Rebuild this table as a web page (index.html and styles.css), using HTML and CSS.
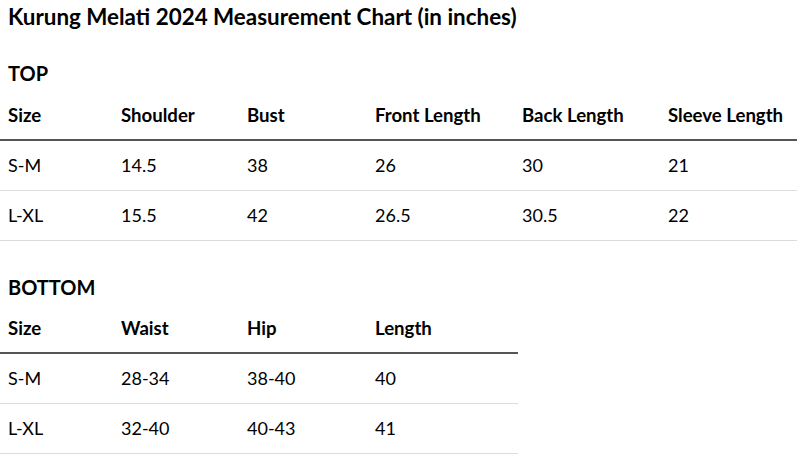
FILE: index.html
```html
<!DOCTYPE html>
<html lang="en">
<head>
<meta charset="utf-8">
<title>Kurung Melati 2024 Measurement Chart</title>
<link rel="stylesheet" href="styles.css">
</head>
<body>
<h1 class="title">Kurung Melati 2024 Measurement Chart (in inches)</h1>

<h2 class="section section-top">TOP</h2>
<table class="chart chart-top">
  <colgroup>
    <col class="c-size"><col class="c-2"><col class="c-3"><col class="c-4"><col class="c-5"><col class="c-6">
  </colgroup>
  <thead>
    <tr><th>Size</th><th>Shoulder</th><th>Bust</th><th>Front Length</th><th>Back Length</th><th>Sleeve Length</th></tr>
  </thead>
  <tbody>
    <tr><td>S-M</td><td>14.5</td><td>38</td><td>26</td><td>30</td><td>21</td></tr>
    <tr><td>L-XL</td><td>15.5</td><td>42</td><td>26.5</td><td>30.5</td><td>22</td></tr>
  </tbody>
</table>

<h2 class="section section-bottom">BOTTOM</h2>
<table class="chart chart-bottom">
  <colgroup>
    <col class="c-size"><col class="c-2"><col class="c-3"><col class="c-4b">
  </colgroup>
  <thead>
    <tr><th>Size</th><th>Waist</th><th>Hip</th><th>Length</th></tr>
  </thead>
  <tbody>
    <tr><td>S-M</td><td>28-34</td><td>38-40</td><td>40</td></tr>
    <tr><td>L-XL</td><td>32-40</td><td>40-43</td><td>41</td></tr>
  </tbody>
</table>
</body>
</html>
```

FILE: styles.css
```css
html, body {
  margin: 0;
  padding: 0;
  background: #fff;
}
body {
  font-family: "Lato", "Liberation Sans", sans-serif;
  color: #000;
  width: 800px;
}
.title {
  margin: 0;
  padding: 4px 0 0 8px;
  font-size: 22.4px;
  line-height: 26px;
  font-weight: 700;
}
.section {
  margin: 0;
  padding-left: 8px;
  font-size: 20px;
  line-height: 26px;
  font-weight: 700;
}
.section-top { margin-top: 30px; }
.section-bottom { margin-top: 33px; }
.chart {
  border-collapse: collapse;
  table-layout: fixed;
  margin-top: 5px;
}
.chart-top { width: 797px; }
.chart-bottom { width: 518px; margin-top: 4px; }
.c-size { width: 113px; }
.c-2 { width: 126px; }
.c-3 { width: 128px; }
.c-4 { width: 147px; }
.c-5 { width: 146px; }
.c-6 { width: 137px; }
.c-4b { width: 151px; }
.chart th, .chart td {
  padding: 0 8px;
  text-align: left;
  white-space: nowrap;
}
.chart th {
  font-size: 18.6px;
  line-height: 48px;
  font-weight: 700;
  border-bottom: 2px solid #555;
}
.chart td {
  font-size: 18px;
  line-height: 49px;
  font-weight: 400;
  border-bottom: 1px solid #dcdcdc;
}
```
